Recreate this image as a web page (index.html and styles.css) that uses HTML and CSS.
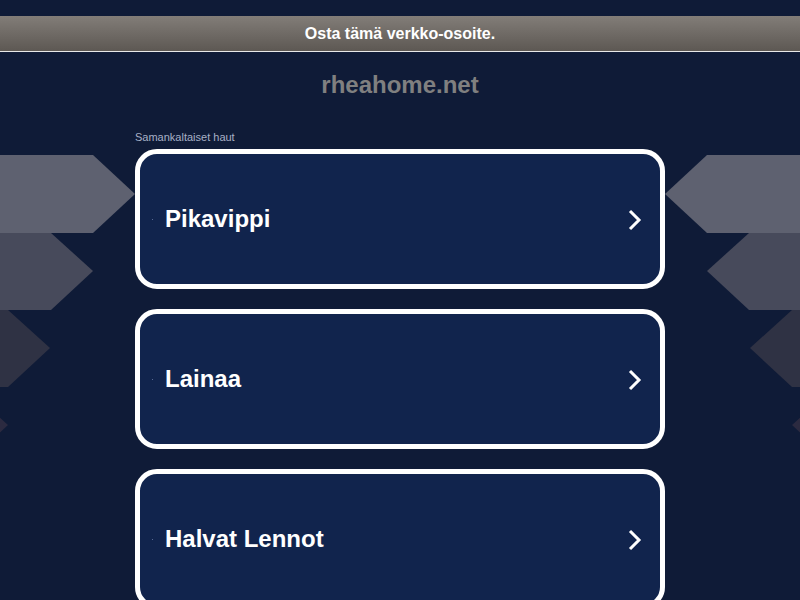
FILE: index.html
```html
<!DOCTYPE html>
<html lang="fi">
<head>
  <meta charset="UTF-8">
  <title>rheahome.net</title>
  <link rel="stylesheet" href="styles.css">
</head>
<body>

<!-- background arrows -->
<svg class="deco" width="800" height="600" viewBox="0 0 800 600">
  <polygon points="0,155 93,155 135,194 93,233 0,233" fill="#5e6170"/>
  <polygon points="0,233 51,233 93,271 51,310 0,310" fill="#474a5b"/>
  <polygon points="0,310 8,310 50,348 8,387 0,387" fill="#2f3244"/>
  <polygon points="0,387 -34,387 8,425 -34,464 0,464" fill="#2b2a40"/>
  <polygon points="800,155 707,155 665,194 707,233 800,233" fill="#5e6170"/>
  <polygon points="800,233 749,233 707,271 749,310 800,310" fill="#474a5b"/>
  <polygon points="800,310 792,310 750,348 792,387 800,387" fill="#2f3244"/>
  <polygon points="800,387 834,387 792,425 834,464 800,464" fill="#2b2a40"/>
</svg>

<div class="page">
  <div class="banner">Osta tämä verkko-osoite.</div>
  <div class="domain">rheahome.net</div>

  <div class="results">
    <div class="results-title">Samankaltaiset haut</div>

    <a class="card" href="#">
      <span class="dot"></span>
      <span class="card-label">Pikavippi</span>
      <svg class="chev" width="16" height="22" viewBox="0 0 16 22"><polyline points="3,2 12,11 3,20" fill="none" stroke="#fff" stroke-width="3"/></svg>
    </a>
    <a class="card" href="#">
      <span class="dot"></span>
      <span class="card-label">Lainaa</span>
      <svg class="chev" width="16" height="22" viewBox="0 0 16 22"><polyline points="3,2 12,11 3,20" fill="none" stroke="#fff" stroke-width="3"/></svg>
    </a>
    <a class="card" href="#">
      <span class="dot"></span>
      <span class="card-label">Halvat Lennot</span>
      <svg class="chev" width="16" height="22" viewBox="0 0 16 22"><polyline points="3,2 12,11 3,20" fill="none" stroke="#fff" stroke-width="3"/></svg>
    </a>
  </div>
</div>

</body>
</html>
```

FILE: styles.css
```css
body {
  margin: 0;
  background: #0f1b37;
  font-family: "Liberation Sans", Arial, sans-serif;
  overflow: hidden;
  height: 600px;
}
.deco {
  position: absolute;
  top: 0;
  left: 0;
  z-index: 0;
}
.page {
  position: relative;
  z-index: 1;
  padding-top: 16px;
}
.banner {
  height: 35px;
  line-height: 35px;
  text-align: center;
  color: #fff;
  font-weight: bold;
  font-size: 16px;
  background: linear-gradient(#827d78, #5d5853);
  border-bottom: 1px solid #e8e8e8;
}
.domain {
  text-align: center;
  color: #808080;
  font-weight: bold;
  font-size: 24px;
  margin-top: 18px;
  height: 30px;
  line-height: 30px;
}
.results {
  width: 530px;
  margin: 31px auto 0;
  display: flex;
  flex-direction: column;
  gap: 20px;
}
.results-title {
  font-size: 11px;
  color: #a7b0c6;
  margin-bottom: -16px;
  height: 14px;
}
.card {
  display: flex;
  align-items: center;
  height: 130px;
  border: 5px solid #fff;
  border-radius: 22px;
  background: #11244d;
  text-decoration: none;
  color: #fff;
  padding: 0 17px 0 12px;
}
.dot {
  width: 1px;
  height: 1px;
  background: #5a6b94;
  margin-right: 12px;
}
.card-label {
  flex: 1;
  font-size: 24px;
  font-weight: bold;
}
.chev {
  margin-top: 2px;
}
```
